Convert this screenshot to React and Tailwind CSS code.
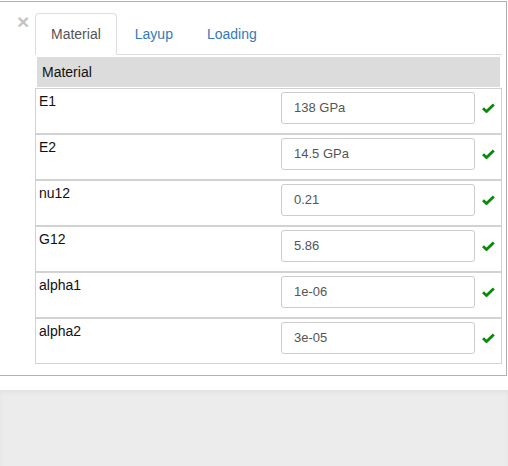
import React from "react";

function Check() {
  return (
    <svg width="13" height="10" viewBox="0 0 13 10" className="block">
      <path d="M1 5.2 L4.5 8.5 L11.8 1.4" fill="none" stroke="#0a8a0a" strokeWidth="2.8" strokeLinejoin="miter" />
    </svg>
  );
}

const rows = [
  ["E1", "138 GPa"],
  ["E2", "14.5 GPa"],
  ["nu12", "0.21"],
  ["G12", "5.86"],
  ["alpha1", "1e-06"],
  ["alpha2", "3e-05"],
];

export default function App() {
  return (
    <div className="w-[508px] h-[466px] bg-white flex flex-col pt-px" style={{ fontFamily: '"Liberation Sans", Arial, sans-serif' }}>
      <div className="w-[507px] h-[375px] bg-white border-t border-r border-b border-[#b0b0b0] flex">
        <div className="w-[35px] shrink-0 pt-[9px] pl-[17px]">
          <span className="block text-[21px] font-bold leading-[21px] text-[#c4c4c4]">×</span>
        </div>
        <div className="w-[467px] pt-[11px] flex flex-col">
          <div className="flex border-b border-[#dddddd] h-[42px]">
            <div className="h-[42px] px-[15px] flex items-center border border-[#dddddd] border-b-white rounded-t bg-white text-[14px] text-[#555555] mr-[2px]">
              Material
            </div>
            <div className="h-[42px] px-[15px] flex items-center border border-transparent text-[14px] text-[#337ab7] mr-[2px]">Layup</div>
            <div className="h-[42px] px-[15px] flex items-center border border-transparent text-[14px] text-[#337ab7]">Loading</div>
          </div>
          <div className="mt-[2px] mx-[2px] h-[30px] bg-[#dcdcdc] flex items-center pl-[5px] text-[14px] text-[#111]">
            Material
          </div>
          <div className="mt-px flex flex-col">
            {rows.map(([label, value]) => (
              <div key={label} className="h-[46px] border border-[#d2d2d2] flex items-start">
                <div className="w-[245px] pl-[3px] pt-[4px] text-[14px] leading-[16px] text-[#111]">{label}</div>
                <div className="mt-[3px] w-[194px] h-[32px] border border-[#cccccc] rounded-[3px] flex items-center pl-[12px] text-[13px] text-[#555555]">
                  {value}
                </div>
                <div className="w-[26px] h-[38px] flex items-center justify-center">
                  <Check />
                </div>
              </div>
            ))}
          </div>
        </div>
      </div>
      <div className="h-[14px] bg-white" />
      <div className="flex-1 bg-[#ececec] shadow-[inset_0_3px_4px_rgba(0,0,0,0.04)]" />
    </div>
  );
}
